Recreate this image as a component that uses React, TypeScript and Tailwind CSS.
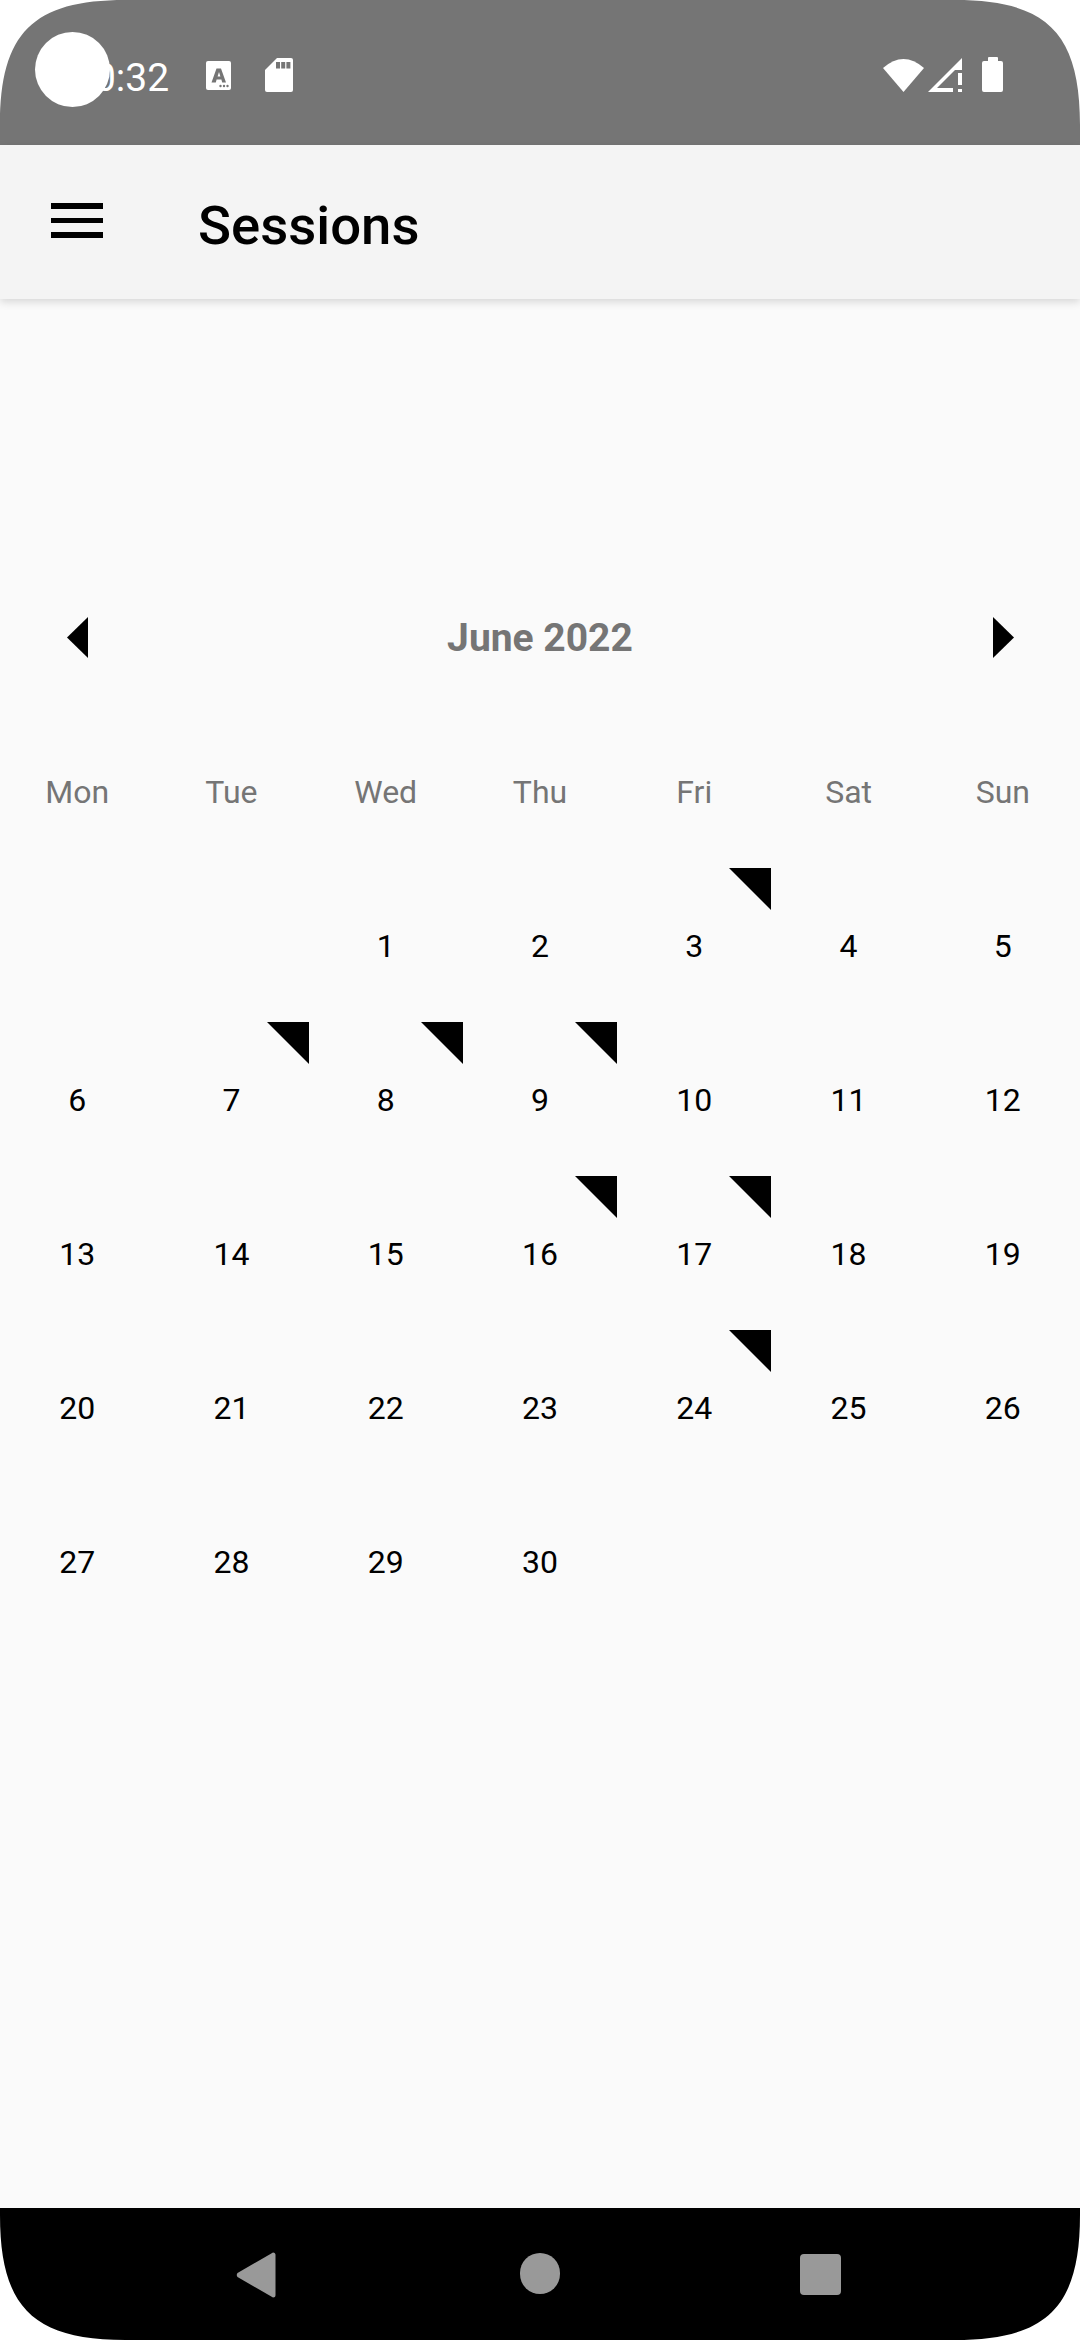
const weekDays = ["Mon", "Tue", "Wed", "Thu", "Fri", "Sat", "Sun"];

// null = blank cell before/after the month
const days: (number | null)[] = [
  null, null, 1, 2, 3, 4, 5,
  6, 7, 8, 9, 10, 11, 12,
  13, 14, 15, 16, 17, 18, 19,
  20, 21, 22, 23, 24, 25, 26,
  27, 28, 29, 30, null, null, null,
];

const sessionDays = [3, 7, 8, 9, 16, 17, 24];

function StatusBar() {
  return (
    <div className="relative flex h-[145px] shrink-0 items-start bg-[#757575] text-white">
      <div className="absolute left-[35px] top-[32px] h-[75px] w-[75px] rounded-full bg-white" />
      <span className="ml-[72px] mt-[57px] text-[39px] leading-[42px]">10:32</span>
      <svg className="ml-[37px] mt-[61px]" width="25" height="29" viewBox="0 0 25 29">
        <rect width="25" height="29" rx="2" fill="#fff" />
        <path d="M5.5 21.5 L10.5 7.5 H15 L20 21.5 H16.2 L15.4 18.6 H10.6 L9.8 21.5 Z M11.6 15.4 H14.4 L13 11 Z" fill="#757575" fillRule="evenodd" />
        <circle cx="14.5" cy="25" r="1.2" fill="#757575" />
        <circle cx="18" cy="25" r="1.2" fill="#757575" />
        <circle cx="21.5" cy="25" r="1.2" fill="#757575" />
      </svg>
      <svg className="ml-[34px] mt-[58px]" width="28" height="34" viewBox="0 0 28 34">
        <path d="M12 0 H26 Q28 0 28 2 V32 Q28 34 26 34 H2 Q0 34 0 32 V12 Z" fill="#fff" />
        <rect x="11" y="4" width="4" height="6.5" fill="#757575" />
        <rect x="16.2" y="4" width="4" height="6.5" fill="#757575" />
        <rect x="21.4" y="4" width="4" height="6.5" fill="#757575" />
      </svg>
      <div className="ml-auto mr-[77px] mt-[57px] flex items-end gap-[4px]">
        <svg width="41" height="35" viewBox="0 0 41 35">
          <path d="M0 11 Q20.5 -7 41 11 L20.5 35 Z" fill="#fff" />
        </svg>
        <svg width="34" height="34" viewBox="0 0 34 34">
          <path d="M0 34 L34 0 V12 H27 L9 30 H25 V34 Z" fill="#fff" />
          <rect x="30" y="15" width="4" height="12" fill="#fff" />
          <rect x="30" y="31" width="4" height="3" fill="#fff" />
        </svg>
        <svg className="ml-[16px]" width="21" height="35" viewBox="0 0 21 35">
          <path d="M6 1 Q6 0 7 0 H15 Q16 0 16 1 V4 H19 Q21 4 21 6 V33 Q21 35 19 35 H2 Q0 35 0 33 V6 Q0 4 2 4 H6 Z" fill="#fff" />
        </svg>
      </div>
    </div>
  );
}

function AppBar() {
  return (
    <div className="z-10 flex h-[154px] shrink-0 items-center bg-[#f4f4f4] shadow-[0_3px_8px_rgba(0,0,0,0.14)]">
      <div className="ml-[51px] flex w-[52px] flex-col gap-[9px] pb-[3px]">
        <div className="h-[6px] bg-black" />
        <div className="h-[5px] bg-black" />
        <div className="h-[6px] bg-black" />
      </div>
      <h1 className="ml-[95px] pt-[6px] text-[54.5px] font-medium leading-none text-black">Sessions</h1>
    </div>
  );
}

function Calendar() {
  return (
    <div className="flex-1 bg-[#fafafa] pt-[261px]">
      <div className="grid h-[154px] grid-cols-7 items-center justify-items-center">
        <svg width="21" height="41" viewBox="0 0 21 41">
          <path d="M21 0 V41 L0 20.5 Z" fill="#000" />
        </svg>
        <div className="col-span-5 pt-[2px] text-[39px] font-bold text-[#757575]">June 2022</div>
        <svg className="translate-x-[1px]" width="21" height="41" viewBox="0 0 21 41">
          <path d="M0 0 V41 L21 20.5 Z" fill="#000" />
        </svg>
      </div>
      <div className="grid grid-cols-7">
        {weekDays.map((day) => (
          <div key={day} className="flex h-[154px] items-center justify-center pt-[2px] text-[32px] text-[#757575]">
            {day}
          </div>
        ))}
        {days.map((day, index) => (
          <div key={index} className="relative flex h-[154px] items-center justify-center pt-[2px] text-[32px] text-black">
            {day}
            {day !== null && sessionDays.includes(day) && (
              <svg className="absolute right-0 top-0" width="42" height="42" viewBox="0 0 42 42">
                <path d="M0 0 H42 V42 Z" fill="#000" />
              </svg>
            )}
          </div>
        ))}
      </div>
    </div>
  );
}

function NavBar() {
  return (
    <div className="relative h-[132px] shrink-0 bg-black">
      <svg className="absolute left-[236px] top-[44px]" width="40" height="46" viewBox="0 0 40 46">
        <path d="M37 0.5 Q39.5 0.5 39.5 3 V43 Q39.5 45.5 37 45.5 L1.5 25 Q0 23 1.5 21 Z" fill="#999" />
      </svg>
      <div className="absolute left-[520px] top-[45px] h-[41px] w-[40px] rounded-full bg-[#999]" />
      <div className="absolute left-[800px] top-[46px] h-[41px] w-[41px] rounded-[4px] bg-[#999]" />
    </div>
  );
}

// the device's screen corners, white over the bars
function ScreenCorner({ className }: { className: string }) {
  return (
    <svg className={`absolute ${className}`} width="125" height="125" viewBox="0 0 125 125">
      <path d="M0 0 H125 C33 0 0 33 0 125 Z" fill="#fff" />
    </svg>
  );
}

export default function App() {
  return (
    <div className="relative flex h-[2340px] w-[1080px] flex-col overflow-hidden bg-white font-['Roboto',sans-serif]">
      <StatusBar />
      <AppBar />
      <Calendar />
      <NavBar />
      <ScreenCorner className="left-0 top-0" />
      <ScreenCorner className="right-0 top-0 -scale-x-100" />
      <ScreenCorner className="bottom-0 left-0 -scale-y-100" />
      <ScreenCorner className="bottom-0 right-0 -scale-100" />
    </div>
  );
}
